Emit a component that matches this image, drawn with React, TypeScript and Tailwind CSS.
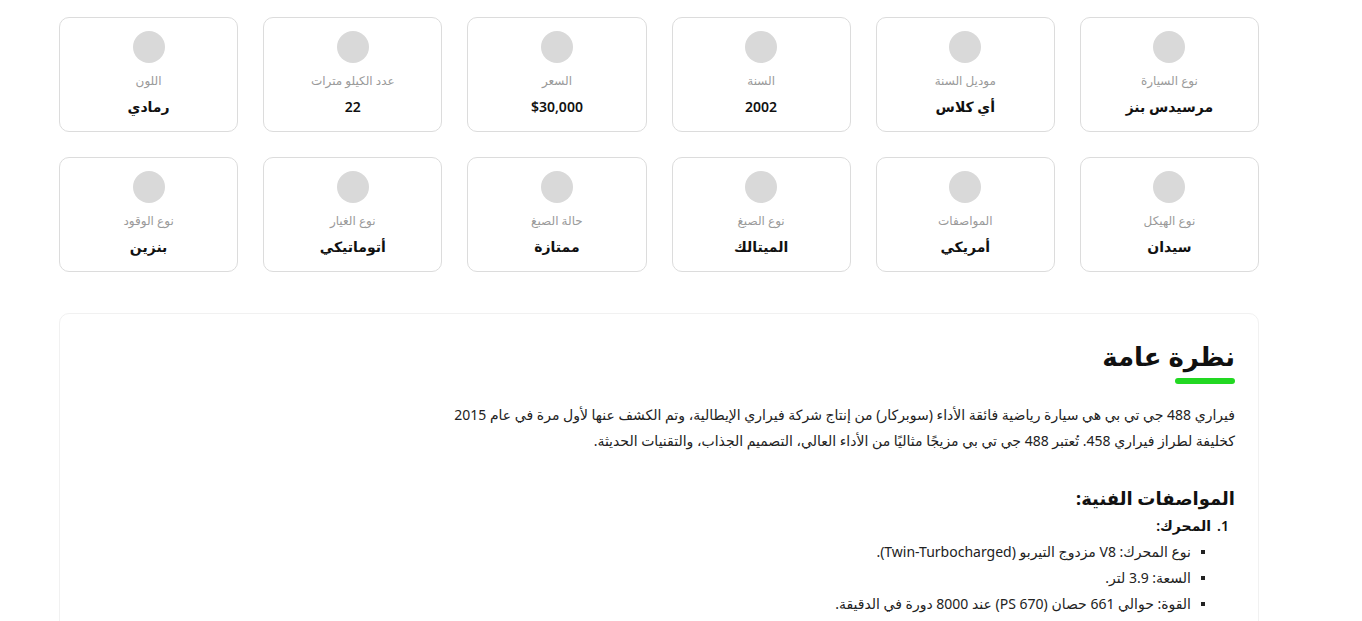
import React from 'react';

// بطاقات المواصفات السريعة
const specRows: { label: string; value: string }[][] = [
  [
    { label: 'نوع السيارة', value: 'مرسيدس بنز' },
    { label: 'موديل السنة', value: 'أي كلاس' },
    { label: 'السنة', value: '2002' },
    { label: 'السعر', value: '$30,000' },
    { label: 'عدد الكيلو مترات', value: '22' },
    { label: 'اللون', value: 'رمادي' },
  ],
  [
    { label: 'نوع الهيكل', value: 'سيدان' },
    { label: 'المواصفات', value: 'أمريكي' },
    { label: 'نوع الصبغ', value: 'الميتالك' },
    { label: 'حالة الصبغ', value: 'ممتازة' },
    { label: 'نوع الغيار', value: 'أتوماتيكي' },
    { label: 'نوع الوقود', value: 'بنزين' },
  ],
];

const engineSpecs = [
  'نوع المحرك: V8 مزدوج التيربو (Twin-Turbocharged).',
  'السعة: 3.9 لتر.',
  'القوة: حوالي 661 حصان (670 PS) عند 8000 دورة في الدقيقة.',
];

function SpecCard({ label, value }: { label: string; value: string }) {
  return (
    <div className="h-[115px] rounded-[10px] border border-[#dcdcdc] bg-white flex flex-col items-center pt-[13px]">
      <div className="w-8 h-8 rounded-full bg-[#d9d9d9]" />
      <div className="mt-[10px] text-[12px] leading-[16px] text-[#9a9a9a]">{label}</div>
      <div className="mt-[8px] text-[14px] leading-[20px] font-semibold text-[#111]">{value}</div>
    </div>
  );
}

export default function App() {
  return (
    <div
      dir="rtl"
      className="min-h-[621px] bg-white text-[#111]"
      style={{ fontFamily: '"Noto Sans", "DejaVu Sans", sans-serif' }}
    >
      <div className="mr-[103px] ml-[59px] pt-[17px]">
        <div className="flex flex-col gap-[25px]">
          {specRows.map((row, i) => (
            <div key={i} className="grid grid-cols-6 gap-[25px]">
              {row.map((s) => (
                <SpecCard key={s.label} label={s.label} value={s.value} />
              ))}
            </div>
          ))}
        </div>

        {/* نظرة عامة */}
        <div className="mt-[41px] rounded-[10px] border border-[#f1f1f1] px-[23px] pt-[24px] pb-6">
          <h2 className="text-[26px] leading-[36px] font-bold text-[#111]">نظرة عامة</h2>
          <div className="mt-[4px] w-[60px] h-[6px] rounded-full bg-[#22d822]" />
          <p className="mt-[18px] text-[14px] leading-[26px] text-[#222]">
            فيراري 488 جي تي بي هي سيارة رياضية فائقة الأداء (سوبركار) من إنتاج شركة فيراري الإيطالية، وتم الكشف عنها لأول مرة في عام 2015
            <br />
            كخليفة لطراز فيراري 458. تُعتبر 488 جي تي بي مزيجًا مثاليًا من الأداء العالي، التصميم الجذاب، والتقنيات الحديثة.
          </p>

          <h3 className="mt-[31px] text-[18px] leading-[26px] font-bold text-[#111]">المواصفات الفنية:</h3>
          <div className="mt-[2px] flex gap-[6px] text-[14px] leading-[26px] font-semibold pr-[6px]">
            <span>1.</span>
            <span>المحرك:</span>
          </div>
          <ul className="text-[14px] leading-[26px] text-[#222] pr-[30px]">
            {engineSpecs.map((t) => (
              <li key={t} className="flex items-center gap-[10px]">
                <span className="w-[4px] h-[4px] bg-[#222] shrink-0" />
                <span>{t}</span>
              </li>
            ))}
          </ul>
        </div>
      </div>
    </div>
  );
}
